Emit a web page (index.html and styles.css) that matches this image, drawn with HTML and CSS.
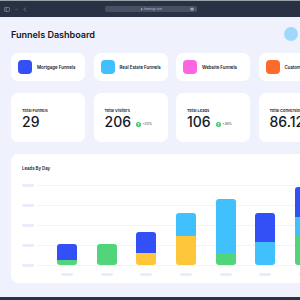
FILE: index.html
```html
<!DOCTYPE html>
<html lang="en">
<head>
  <meta charset="UTF-8" />
  <meta name="viewport" content="width=device-width, initial-scale=1" />
  <title>Funnels Dashboard</title>
  <link rel="stylesheet" href="styles.css">
</head>
<body>

  <div class="browser-bar">
    <div class="browser-tools">
      <svg width="6" height="5" viewBox="0 0 6 5"><rect x="0.5" y="0.5" width="5" height="4" rx="0.8" fill="none" stroke="#7d8594" stroke-width="0.8"/><line x1="2.2" y1="0.5" x2="2.2" y2="4.5" stroke="#7d8594" stroke-width="0.8"/></svg>
      <svg width="3" height="3" viewBox="0 0 3 3"><path d="M0.4 0.9 L1.5 2.1 L2.6 0.9" fill="none" stroke="#6b7382" stroke-width="0.6"/></svg>
      <svg width="4" height="5" viewBox="0 0 4 5"><path d="M2.8 0.6 L1 2.5 L2.8 4.4" fill="none" stroke="#7d8594" stroke-width="0.8"/></svg>
    </div>
    <div class="url-bar">
      <span class="url-text">&#128274; feedesign.com</span>
      <svg class="reload" width="4" height="4" viewBox="0 0 4 4"><rect x="0.4" y="0.8" width="3.2" height="2.8" rx="0.5" fill="#9aa1ad"/></svg>
    </div>
  </div>

  <main class="page">
    <header class="page-header">
      <h1>Funnels Dashboard</h1>
      <div class="avatar"></div>
    </header>

    <section class="row">
      <div class="card funnel"><span class="funnel-icon blue"></span><span class="funnel-name">Mortgage Funnels</span></div>
      <div class="card funnel"><span class="funnel-icon sky"></span><span class="funnel-name">Real Estate Funnels</span></div>
      <div class="card funnel"><span class="funnel-icon pink"></span><span class="funnel-name">Website Funnels</span></div>
      <div class="card funnel"><span class="funnel-icon orange"></span><span class="funnel-name">Custom Funnels</span></div>
    </section>

    <section class="row">
      <div class="card stat">
        <div class="stat-label">Total Funnels</div>
        <div class="stat-line"><span class="stat-value">29</span></div>
      </div>
      <div class="card stat">
        <div class="stat-label">Total Visitors</div>
        <div class="stat-line">
          <span class="stat-value">206</span>
          <span class="trend"><svg width="5" height="5" viewBox="0 0 5 5"><circle cx="2.5" cy="2.5" r="2.5" fill="#3dc46b"/><path d="M2.5 1.2 V3.8 M1.4 2.3 L2.5 1.2 L3.6 2.3" fill="none" stroke="#fff" stroke-width="0.7"/></svg>+20%</span>
        </div>
      </div>
      <div class="card stat">
        <div class="stat-label">Total Leads</div>
        <div class="stat-line">
          <span class="stat-value">106</span>
          <span class="trend"><svg width="5" height="5" viewBox="0 0 5 5"><circle cx="2.5" cy="2.5" r="2.5" fill="#3dc46b"/><path d="M2.5 1.2 V3.8 M1.4 2.3 L2.5 1.2 L3.6 2.3" fill="none" stroke="#fff" stroke-width="0.7"/></svg>+36%</span>
        </div>
      </div>
      <div class="card stat">
        <div class="stat-label">Total Conversion</div>
        <div class="stat-line"><span class="stat-value">86.12%</span></div>
      </div>
    </section>

    <section class="card chart">
      <div class="chart-head">
        <h2>Leads By Day</h2>
        <span class="pill wide"></span>
      </div>
      <div class="plot">
        <div class="grid-lines">
          <div class="grid-row"><span class="pill"></span><span class="line"></span></div>
          <div class="grid-row"><span class="pill"></span><span class="line"></span></div>
          <div class="grid-row"><span class="pill"></span><span class="line"></span></div>
          <div class="grid-row"><span class="pill"></span><span class="line"></span></div>
          <div class="grid-row"><span class="pill"></span><span class="line"></span></div>
        </div>
        <div class="bars">
          <div class="bar"><span class="seg blue" style="height:16px"></span><span class="seg green" style="height:5px"></span></div>
          <div class="bar"><span class="seg green" style="height:21px"></span></div>
          <div class="bar"><span class="seg blue" style="height:21px"></span><span class="seg yellow" style="height:12px"></span></div>
          <div class="bar"><span class="seg sky" style="height:23px"></span><span class="seg yellow" style="height:29px"></span></div>
          <div class="bar"><span class="seg sky" style="height:54px"></span><span class="seg green" style="height:12px"></span></div>
          <div class="bar"><span class="seg blue" style="height:29px"></span><span class="seg sky" style="height:23px"></span></div>
          <div class="bar"><span class="seg blue" style="height:30px"></span><span class="seg sky" style="height:19px"></span><span class="seg green" style="height:29px"></span></div>
        </div>
      </div>
      <div class="x-labels">
        <span class="pill"></span><span class="pill"></span><span class="pill"></span><span class="pill"></span>
        <span class="pill"></span><span class="pill"></span><span class="pill"></span>
      </div>
    </section>
  </main>

  <div class="bottom-bar"></div>

</body>
</html>
```

FILE: styles.css
```css
html, body {
  margin: 0;
  padding: 0;
}
body {
  width: 300px;
  height: 300px;
  overflow: hidden;
  display: flex;
  flex-direction: column;
  background: #eff2fd;
  font-family: Inter, "Noto Sans", sans-serif;
  color: #15181f;
}
.browser-bar {
  flex: 0 0 16px;
  border-top: 1px solid #9ba1aa;
  background: #283244;
  display: flex;
  align-items: center;
}
.browser-tools {
  display: flex;
  align-items: center;
  gap: 5px;
  padding-left: 4px;
  width: 101px;
}
.url-bar {
  width: 92px;
  height: 6px;
  background: #485163;
  border-radius: 2px;
  display: flex;
  align-items: center;
  justify-content: center;
  position: relative;
}
.url-text {
  font-size: 2.6px;
  color: #b7bcc6;
  line-height: 1;
}
.reload {
  position: absolute;
  right: 3px;
  top: 1px;
}
.page {
  flex: 1;
  padding: 10px 0 0 11px;
  display: flex;
  flex-direction: column;
  gap: 12px;
  overflow: hidden;
}
.page-header {
  display: flex;
  align-items: center;
  justify-content: space-between;
  padding-right: 2px;
}
.page-header h1 {
  margin: 0;
  font-size: 9.1px;
  font-weight: 600;
  letter-spacing: -0.05px;
}
.avatar {
  width: 14px;
  height: 14px;
  border-radius: 50%;
  background: #a0d8fc;
}
.row {
  display: flex;
  gap: 8.5px;
}
.card {
  background: #ffffff;
  border-radius: 7px;
  flex-shrink: 0;
}
.funnel {
  width: 74px;
  height: 28px;
  box-sizing: border-box;
  padding: 0 7px;
  display: flex;
  align-items: center;
  gap: 5px;
}
.funnel-icon {
  width: 14px;
  height: 14px;
  border-radius: 4px;
  flex-shrink: 0;
}
.funnel-name {
  font-size: 4.4px;
  font-weight: 600;
  white-space: nowrap;
}
.blue { background: #3350f6; }
.sky { background: #40c0fd; }
.pink { background: #fc66e0; }
.orange { background: #fd6a2b; }
.green { background: #52d57a; }
.yellow { background: #fec63a; }
.stat {
  width: 74px;
  height: 49px;
  box-sizing: border-box;
  padding: 15px 0 0 11px;
}
.stat-label {
  font-size: 4px;
  line-height: 5px;
  font-weight: 600;
  white-space: nowrap;
}
.stat-line {
  display: flex;
  align-items: flex-end;
  gap: 5px;
}
.stat-value {
  font-size: 14px;
  line-height: 17px;
  font-weight: 500;
  white-space: nowrap;
}
.trend {
  display: flex;
  align-items: center;
  gap: 1.5px;
  margin-bottom: 3.5px;
  font-size: 3.4px;
  color: #3a3f4a;
  white-space: nowrap;
}
.chart {
  width: 340px;
  box-sizing: border-box;
  padding: 12px 0 7px 11px;
}
.chart-head {
  display: flex;
  align-items: center;
  justify-content: space-between;
  width: 294px;
}
.chart-head h2 {
  margin: 0;
  font-size: 4.3px;
  line-height: 5px;
  font-weight: 600;
}
.pill {
  display: block;
  width: 12px;
  height: 3px;
  border-radius: 2px;
  background: #e9ecfa;
  flex-shrink: 0;
}
.pill.wide {
  width: 14px;
}
.plot {
  display: grid;
  margin-top: 4px;
}
.grid-lines, .bars {
  grid-area: 1 / 1;
}
.grid-row {
  height: 20px;
  display: flex;
  align-items: center;
  gap: 4px;
}
.line {
  flex: 1;
  height: 1px;
  background: #f3f4f9;
}
.bars {
  display: flex;
  align-items: flex-end;
  gap: 19.7px;
  padding: 0 0 10px 35px;
}
.bar {
  width: 20px;
  display: flex;
  flex-direction: column;
  border-radius: 3px;
  overflow: hidden;
  flex-shrink: 0;
}
.seg {
  display: block;
}
.x-labels {
  display: flex;
  gap: 27.7px;
  padding-left: 39px;
  margin-top: -2px;
}
.bottom-bar {
  flex: 0 0 3px;
  background: #283244;
}
```
